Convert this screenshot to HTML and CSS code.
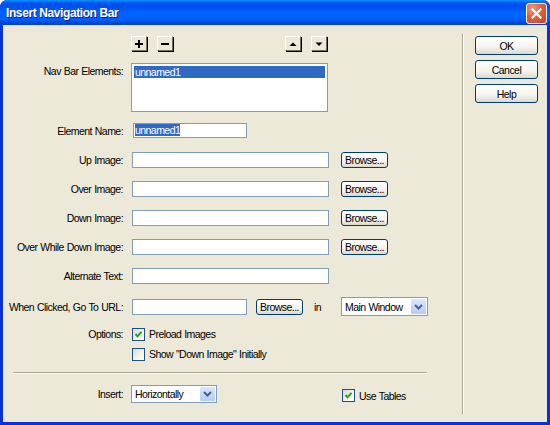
FILE: index.html
```html
<!DOCTYPE html>
<html>
<head>
<meta charset="utf-8">
<link rel="stylesheet" href="styles.css">
</head>
<body>
<div class="window">
  <div class="titlebar">
    <span class="title">Insert Navigation Bar</span>
    <span class="close"><svg width="11" height="11" viewBox="0 0 11 11"><path d="M1.5 1.5 L9.5 9.5 M9.5 1.5 L1.5 9.5" stroke="#fff" stroke-width="2.2" stroke-linecap="square"/></svg></span>
  </div>
  <div class="body">
    <div class="main">
      <div class="row toolbar">
        <span></span>
        <div class="ctrls">
          <span class="tbtn"><svg width="8" height="8" viewBox="0 0 8 8"><path d="M3 0h2v3h3v2H5v3H3V5H0V3h3z" fill="#000"/></svg></span>
          <span class="tbtn"><svg width="8" height="8" viewBox="0 0 8 8"><path d="M0 3h8v2H0z" fill="#000"/></svg></span>
          <span class="tspacer"></span>
          <span class="tbtn"><svg width="8" height="8" viewBox="0 0 8 8"><path d="M0.5 6 L4 2.5 L7.5 6z" fill="#000"/></svg></span>
          <span class="tbtn"><svg width="8" height="8" viewBox="0 0 8 8"><path d="M0.5 2.5 L4 6 L7.5 2.5z" fill="#000"/></svg></span>
        </div>
      </div>
      <div class="row listrow">
        <label class="lbl">Nav Bar Elements:</label>
        <div class="ctrls">
          <div class="listbox"><div class="item sel">unnamed1</div></div>
        </div>
      </div>
      <div class="row namerow">
        <label class="lbl">Element Name:</label>
        <div class="ctrls"><span class="input name"><span class="hl">unnamed1</span></span></div>
      </div>
      <div class="row field">
        <label class="lbl">Up Image:</label>
        <div class="ctrls"><span class="input wide"></span><span class="btn browse">Browse...</span></div>
      </div>
      <div class="row field">
        <label class="lbl">Over Image:</label>
        <div class="ctrls"><span class="input wide"></span><span class="btn browse">Browse...</span></div>
      </div>
      <div class="row field">
        <label class="lbl">Down Image:</label>
        <div class="ctrls"><span class="input wide"></span><span class="btn browse">Browse...</span></div>
      </div>
      <div class="row field">
        <label class="lbl">Over While Down Image:</label>
        <div class="ctrls"><span class="input wide"></span><span class="btn browse">Browse...</span></div>
      </div>
      <div class="row field">
        <label class="lbl">Alternate Text:</label>
        <div class="ctrls"><span class="input wide"></span></div>
      </div>
      <div class="row field">
        <label class="lbl">When Clicked, Go To URL:</label>
        <div class="ctrls">
          <span class="input url"></span>
          <span class="btn browse url-browse">Browse...</span>
          <span class="in">in</span>
          <span class="select win"><span class="sel-text">Main Window</span><span class="drop"><svg width="9" height="6" viewBox="0 0 9 6"><path d="M1 1 L4.5 4.5 L8 1" stroke="#4d6185" stroke-width="2" fill="none"/></svg></span></span>
        </div>
      </div>
      <div class="row field opt1">
        <label class="lbl">Options:</label>
        <div class="ctrls"><span class="check on"><svg width="9" height="9" viewBox="0 0 9 9"><path d="M1.5 4 L3.5 6.3 L7.5 1.8" stroke="#21a121" stroke-width="2" fill="none"/></svg></span><span class="clabel">Preload Images</span></div>
      </div>
      <div class="row field opt2">
        <span></span>
        <div class="ctrls"><span class="check"></span><span class="clabel">Show "Down Image" Initially</span></div>
      </div>
      <div class="hsep"></div>
      <div class="row insertrow">
        <label class="lbl">Insert:</label>
        <div class="ctrls">
          <span class="select ins"><span class="sel-text">Horizontally</span><span class="drop"><svg width="9" height="6" viewBox="0 0 9 6"><path d="M1 1 L4.5 4.5 L8 1" stroke="#4d6185" stroke-width="2" fill="none"/></svg></span></span>
          <span class="check on tables"><svg width="9" height="9" viewBox="0 0 9 9"><path d="M1.5 4 L3.5 6.3 L7.5 1.8" stroke="#21a121" stroke-width="2" fill="none"/></svg></span><span class="clabel">Use Tables</span>
        </div>
      </div>
    </div>
    <div class="vsep"></div>
    <div class="side">
      <span class="btn dlg">OK</span>
      <span class="btn dlg">Cancel</span>
      <span class="btn dlg">Help</span>
    </div>
  </div>
</div>
</body>
</html>
```
FILE: styles.css
```css
* { box-sizing: border-box; }
html, body { margin: 0; padding: 0; }
body {
  width: 550px;
  height: 425px;
  overflow: hidden;
  font-family: "Liberation Sans", Arial, sans-serif;
  font-size: 10.5px;
  letter-spacing: -0.55px;
  word-spacing: 0.5px;
  color: #000;
  background: #fff;
}
.window {
  width: 550px;
  height: 425px;
  display: flex;
  flex-direction: column;
  background: #0831d9;
  border-radius: 7px 7px 0 0;
  overflow: hidden;
}
.titlebar {
  height: 25px;
  flex: none;
  display: flex;
  align-items: center;
  justify-content: space-between;
  padding: 0 3px 0 6px;
  background: linear-gradient(to bottom, #0997ff 0px, #0053ee 3px, #0050ee 7px, #0066ff 13px, #005cf7 20px, #0046d5 23px, #003dd7 25px);
}
.title {
  color: #fff;
  font-family: "Liberation Sans", Arial, sans-serif;
  font-weight: bold;
  font-size: 12px;
  letter-spacing: -0.4px;
  word-spacing: 0;
  text-shadow: 1px 1px 0 #0f1f7f;
  margin-top: 1px;
}
.close {
  width: 21px;
  height: 21px;
  border: 1px solid #fff;
  border-radius: 3px;
  background: radial-gradient(circle at 30% 25%, #f39a7c 0%, #e2603c 45%, #c84522 100%);
  display: flex;
  align-items: center;
  justify-content: center;
  margin-top: 1px;
}
.body {
  flex: 1;
  display: flex;
  background: #ece9d8;
  margin: 0 3px 3px 3px;
}
.main {
  width: 459px;
  flex: none;
  padding-top: 11px;
  display: flex;
  flex-direction: column;
}
.row {
  display: grid;
  grid-template-columns: 120px 1fr;
  column-gap: 8px;
  align-items: center;
}
.lbl { text-align: right; white-space: nowrap; }
.ctrls { display: flex; align-items: center; white-space: nowrap; }
.toolbar { height: 15px; }
.tbtn {
  width: 16px;
  height: 15px;
  display: flex;
  align-items: center;
  justify-content: center;
  background: #ece9d8;
  border-top: 1px solid #fff;
  border-left: 1px solid #fff;
  border-right: 1px solid #716f64;
  border-bottom: 1px solid #716f64;
  box-shadow: 1px 1px 0 #000;
  margin-right: 10px;
}
.tbtn svg { display: block; }
.tspacer { width: 102px; }
.listrow { margin-top: 12px; align-items: start; }
.listrow .lbl { padding-top: 2px; }
.listbox {
  width: 197px;
  height: 49px;
  background: #fff;
  border: 1px solid #7f9db9;
  padding: 2px;
}
.item { height: 12px; line-height: 12px; padding-left: 1px; }
.item.sel { background: #316ac5; color: #fff; }
.namerow { margin-top: 11px; height: 15px; }
.input {
  display: block;
  height: 16px;
  background: #fff;
  border: 1px solid #7f9db9;
}
.input.name { width: 114px; height: 15px; margin-left: 2px; line-height: 13px; padding-left: 1px; }
.hl { background: #316ac5; color: #fff; }
.input.wide { width: 197px; margin-left: 1px; }
.field { height: 16px; margin-top: 13px; }
.namerow + .field { margin-top: 14px; }
.btn {
  display: flex;
  align-items: center;
  justify-content: center;
  border: 1px solid #003c74;
  border-radius: 3px;
  background: linear-gradient(to bottom, #ffffff 0%, #f4f3ee 60%, #dcd9cc 100%);
  color: #000;
  white-space: nowrap;
}
.browse { width: 47px; height: 16px; margin-left: 12px; }
.input.url { width: 115px; margin-left: 1px; }
.url-browse { margin-left: 9px; }
.in { margin-left: 11px; width: 27px; }
.select {
  display: flex;
  align-items: center;
  justify-content: space-between;
  height: 19px;
  background: #fff;
  border: 1px solid #7f9db9;
  padding: 1px;
  white-space: nowrap;
}
.sel-text { padding-left: 2px; }
.select.win { width: 87px; }
.drop {
  width: 15px;
  height: 15px;
  flex: none;
  background: linear-gradient(to bottom, #dbe7fd, #b5cbf7);
  border-radius: 1px;
  display: flex;
  align-items: center;
  justify-content: center;
}
.opt1 { margin-top: 13px; }
.opt2 { margin-top: 4px; }
.check {
  width: 13px;
  height: 13px;
  flex: none;
  border: 1px solid #1c5180;
  background: linear-gradient(135deg, #dcdbd5 0%, #f4f4f0 60%, #fff 100%);
  display: flex;
  align-items: center;
  justify-content: center;
  margin-left: 1px;
}
.clabel { margin-left: 4px; white-space: nowrap; }
.hsep {
  margin: 10px 0 0 10px;
  width: 414px;
  height: 2px;
  border-top: 1px solid #aca899;
  border-bottom: 1px solid #fff;
}
.insertrow { margin-top: 11px; height: 18px; }
.select.ins { width: 86px; height: 18px; }
.select.ins .drop { height: 14px; }
.check.tables { margin-left: 125px; margin-top: 3px; }
.insertrow .clabel { margin-top: 3px; }
.vsep {
  width: 2px;
  margin: 8px 0 7px 0;
  border-left: 1px solid #aca899;
  border-right: 1px solid #fff;
}
.side {
  padding: 11px 0 0 11px;
  display: flex;
  flex-direction: column;
  gap: 5px;
}
.dlg { width: 63px; height: 19px; }
```
